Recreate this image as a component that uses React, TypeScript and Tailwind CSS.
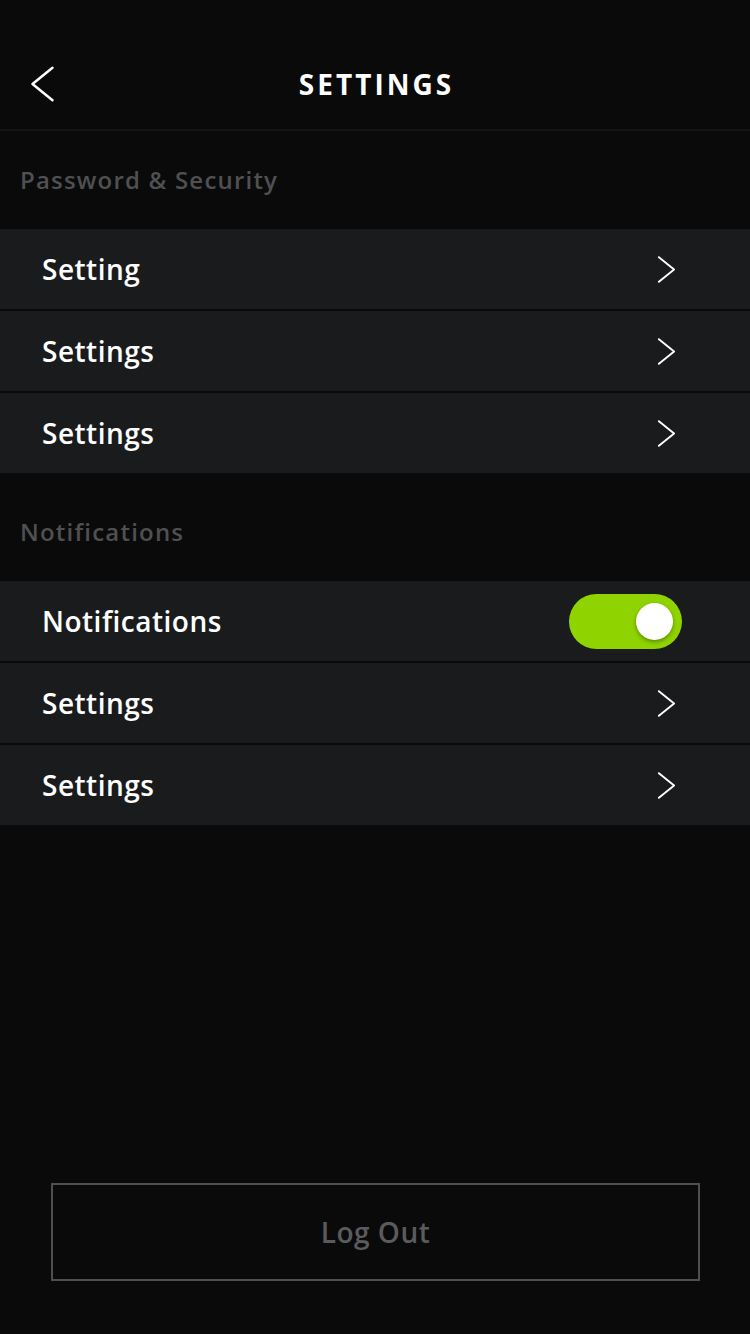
import React, { useState } from 'react';

const font = { fontFamily: '"Open Sans", "Noto Sans", sans-serif' };

function Chevron({ dir = 'right', className = '' }: { dir?: 'left' | 'right'; className?: string }) {
  return (
    <svg viewBox="0 0 20 28" className={className} fill="none" stroke="currentColor" strokeWidth={2} strokeLinecap="round" strokeLinejoin="round">
      {dir === 'right' ? <path d="M2 1l16 13L2 27" /> : <path d="M18 1L2 14l16 13" />}
    </svg>
  );
}

function Row({ label, children }: { label: string; children?: React.ReactNode }) {
  return (
    <div className="h-20 flex items-center justify-between bg-[#1a1b1d] pl-[42px] pr-[74px]">
      <span className="text-[28px] text-white font-semibold tracking-[0.5px]">{label}</span>
      {children ?? <Chevron className="w-[19px] h-[27px] text-white" />}
    </div>
  );
}

function SectionTitle({ title }: { title: string }) {
  return (
    <div className="h-[98px] flex items-center px-5 text-[24px] text-[#4f5052] font-semibold tracking-[1.2px]">
      {title}
    </div>
  );
}

export default function App() {
  const [on, setOn] = useState(true);

  return (
    <div className="w-[750px] h-[1334px] bg-[#0a0a0a] flex flex-col" style={font}>
      <div className="h-[131px] relative flex items-center justify-center border-b-2 border-[#141415] pt-[38px]">
        <Chevron dir="left" className="absolute left-[30px] top-[65px] w-[25px] h-[38px] text-white" />
        <h1 className="text-[28px] font-bold text-white tracking-[3px] pl-[3px]">SETTINGS</h1>
      </div>

      <SectionTitle title="Password & Security" />
      <div className="flex flex-col gap-[2px]">
        <Row label="Setting" />
        <Row label="Settings" />
        <Row label="Settings" />
      </div>

      <div className="h-[10px]" />
      <SectionTitle title="Notifications" />
      <div className="flex flex-col gap-[2px]">
        <Row label="Notifications">
          <button
            onClick={() => setOn(!on)}
            className={`w-[113px] h-[55px] rounded-full flex items-center px-[9px] mr-[-6px] ${on ? 'bg-[#8fd400] justify-end' : 'bg-[#333] justify-start'}`}
          >
            <span className="w-[37px] h-[37px] rounded-full bg-white shadow-[0_2px_4px_rgba(0,0,0,0.35)]" />
          </button>
        </Row>
        <Row label="Settings" />
        <Row label="Settings" />
      </div>

      <div className="flex-1" />
      <div className="pl-[51px] pr-[50px] pb-[53px]">
        <button className="w-full h-[98px] border-2 border-[#4e4f52] text-[28px] text-[#5a5b5e] font-semibold tracking-[0.5px]">
          Log Out
        </button>
      </div>
    </div>
  );
}
